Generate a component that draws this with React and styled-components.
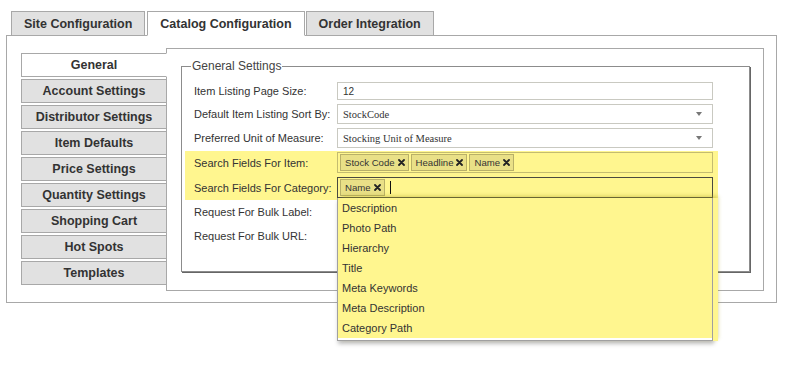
import React from 'react';
import styled, { createGlobalStyle } from 'styled-components';

const GlobalStyle = createGlobalStyle`
  html, body {
    min-height: 371px;
  }
  body {
    margin: 0;
    background: #fff;
    font-family: "Liberation Sans", Arial, sans-serif;
    color: #333;
  }
`;

// Page and top tab strip
const Page = styled.div`
  padding: 11px 0 70px 6px;
  width: 771px;
`;

const TabBar = styled.div`
  display: flex;
  padding-left: 5px;
  position: relative;
  z-index: 2;
`;

const Tab = styled.div`
  height: 23px;
  line-height: 24px;
  padding: 0 12px;
  margin-right: ${({ gap }) => gap}px;
  margin-bottom: -1px;
  border: 1px solid #a8a8a8;
  border-bottom-color: ${({ active }) => (active ? '#fff' : '#a8a8a8')};
  background: ${({ active }) => (active ? '#fff' : '#e1e1e1')};
  font-size: 12.5px;
  font-weight: bold;
  color: #333;
  white-space: nowrap;
`;

const Panel = styled.div`
  border: 1px solid #a8a8a8;
  padding: 12px 12px 11px 14px;
  display: flex;
  align-items: flex-start;
`;

// Left vertical navigation
const Nav = styled.div`
  width: 146px;
  margin-top: 5px;
  display: flex;
  flex-direction: column;
  gap: 2px;
  position: relative;
  z-index: 1;
`;

const NavItem = styled.div`
  height: 22px;
  line-height: 23px;
  border: 1px solid #a8a8a8;
  border-right-color: ${({ active }) => (active ? '#fff' : '#a8a8a8')};
  background: ${({ active }) => (active ? '#fff' : '#e1e1e1')};
  text-align: center;
  font-size: 12.5px;
  font-weight: bold;
  color: #333;
  white-space: nowrap;
`;

const Content = styled.div`
  flex: 1;
  margin-left: -1px;
  border: 1px solid #a8a8a8;
  padding: 10px 13px 17px 14px;
  height: 214px;
`;

// Fieldset with its form rows
const Fieldset = styled.fieldset`
  margin: 0;
  padding: 9px 36px 25px 12px;
  border: 1px solid #8c8c8c;
  box-shadow: 1px 1px 0 #666;
  min-width: 0;
`;

const Legend = styled.legend`
  margin-left: -3px;
  padding: 0 1px;
  font-size: 12px;
  color: #444;
`;

const Rows = styled.div`
  display: flex;
  flex-direction: column;
  gap: 4px;
`;

const Highlight = styled.div`
  display: flex;
  flex-direction: column;
  gap: 4px;
  margin: -1px -5px -2px -9px;
  padding: 1px 5px 2px 9px;
  background: #fff68f;
`;

const Row = styled.div`
  display: flex;
  align-items: center;
`;

const Label = styled.div`
  width: 143px;
  flex: none;
  font-size: 11px;
  color: #333;
  white-space: nowrap;
`;

const Field = styled.div`
  flex: 1;
  position: relative;
`;

const TextBox = styled.div`
  height: ${({ h }) => h}px;
  box-sizing: border-box;
  border: 1px solid #c9c9c1;
  background: #fff;
  padding-left: 5px;
  display: flex;
  align-items: center;
  font-size: ${({ serif }) => (serif ? '10.5px' : '10px')};
  font-family: ${({ serif }) => (serif ? '"Liberation Serif", "Times New Roman", serif' : '"Liberation Sans", Arial, sans-serif')};
  color: #333;
  position: relative;
`;

const Arrow = styled.span`
  position: absolute;
  right: 10px;
  top: 50%;
  margin-top: -2px;
  border-left: 3.5px solid transparent;
  border-right: 3.5px solid transparent;
  border-top: 4px solid #777;
`;

const TagBox = styled.div`
  height: 21px;
  box-sizing: border-box;
  border: 1px solid ${({ focused }) => (focused ? '#4a4a40' : '#c4bc70')};
  padding-left: 2px;
  display: flex;
  align-items: center;
  gap: 2px;
`;

const Tag = styled.span`
  height: 17px;
  box-sizing: border-box;
  border: 1px solid #b9b168;
  background: #e9e087;
  padding: 0 3px 0 4px;
  display: inline-flex;
  align-items: center;
  gap: 3px;
  font-size: 9.6px;
  color: #333;
`;

const Caret = styled.span`
  width: 1px;
  height: 13px;
  background: #111;
  margin-left: 3px;
`;

const Dropdown = styled.div`
  position: absolute;
  top: 100%;
  left: 0;
  right: 0;
  z-index: 5;
  border: 1px solid #a0a0a0;
  border-top: none;
  box-shadow: 5px 0 0 #fff68f, 5px -2px 4px rgba(170, 160, 30, 0.45), 1px 3px 4px rgba(0, 0, 0, 0.25);
  padding-bottom: 2px;
  background-color: #fff;
  background-image: linear-gradient(#fff68f, #fff68f);
  background-repeat: no-repeat;
  background-size: 100% calc(100% - 2px);
`;

const Option = styled.div`
  height: 20px;
  line-height: 20px;
  padding-left: 4px;
  font-size: 11px;
  color: #333;
`;

const RemoveIcon = () => (
  <svg width="7" height="7" viewBox="0 0 7 7">
    <path d="M1 1L6 6M6 1L1 6" stroke="#222" strokeWidth="1.8" strokeLinecap="round" />
  </svg>
);

const tabs = [
  { name: 'Site Configuration', gap: 2 },
  { name: 'Catalog Configuration', gap: 1, active: true },
  { name: 'Order Integration', gap: 0 },
];

const navItems = [
  'General',
  'Account Settings',
  'Distributor Settings',
  'Item Defaults',
  'Price Settings',
  'Quantity Settings',
  'Shopping Cart',
  'Hot Spots',
  'Templates',
];

const categoryOptions = [
  'Description',
  'Photo Path',
  'Hierarchy',
  'Title',
  'Meta Keywords',
  'Meta Description',
  'Category Path',
];

export default function App() {
  return (
    <Page>
      <GlobalStyle />
      <TabBar>
        {tabs.map((t) => (
          <Tab key={t.name} active={t.active} gap={t.gap}>
            {t.name}
          </Tab>
        ))}
      </TabBar>
      <Panel>
        <Nav>
          {navItems.map((item, i) => (
            <NavItem key={item} active={i === 0}>
              {item}
            </NavItem>
          ))}
        </Nav>
        <Content>
          <Fieldset>
            <Legend>General Settings</Legend>
            <Rows>
              <Row>
                <Label>Item Listing Page Size:</Label>
                <Field>
                  <TextBox h={18}>12</TextBox>
                </Field>
              </Row>
              <Row>
                <Label>Default Item Listing Sort By:</Label>
                <Field>
                  <TextBox h={20} serif>
                    StockCode
                    <Arrow />
                  </TextBox>
                </Field>
              </Row>
              <Row>
                <Label>Preferred Unit of Measure:</Label>
                <Field>
                  <TextBox h={20} serif>
                    Stocking Unit of Measure
                    <Arrow />
                  </TextBox>
                </Field>
              </Row>
              <Highlight>
                <Row>
                  <Label>Search Fields For Item:</Label>
                  <Field>
                    <TagBox>
                      {['Stock Code', 'Headline', 'Name'].map((tag) => (
                        <Tag key={tag}>
                          {tag}
                          <RemoveIcon />
                        </Tag>
                      ))}
                    </TagBox>
                  </Field>
                </Row>
                <Row>
                  <Label>Search Fields For Category:</Label>
                  <Field>
                    <TagBox focused>
                      <Tag>
                        Name
                        <RemoveIcon />
                      </Tag>
                      <Caret />
                    </TagBox>
                    <Dropdown>
                      {categoryOptions.map((opt) => (
                        <Option key={opt}>{opt}</Option>
                      ))}
                    </Dropdown>
                  </Field>
                </Row>
              </Highlight>
              <Row>
                <Label>Request For Bulk Label:</Label>
                <Field>
                  <TextBox h={20} />
                </Field>
              </Row>
              <Row>
                <Label>Request For Bulk URL:</Label>
                <Field>
                  <TextBox h={20} />
                </Field>
              </Row>
            </Rows>
          </Fieldset>
        </Content>
      </Panel>
    </Page>
  );
}
